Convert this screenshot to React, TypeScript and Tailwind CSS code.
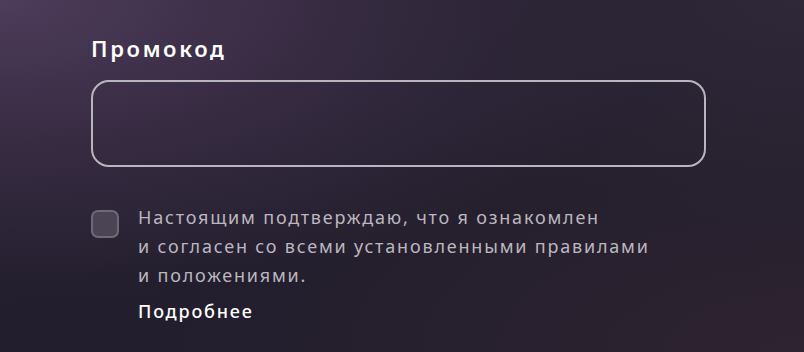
import { useState } from "react";

export default function App() {
  const [code, setCode] = useState("");
  const [agreed, setAgreed] = useState(false);

  return (
    <div
      className="relative h-[352px] w-[804px] overflow-hidden bg-[#221e2d] font-['Noto_Sans',sans-serif]"
    >
      <div className="pointer-events-none absolute inset-0 bg-[radial-gradient(ellipse_at_0%_0%,#4d3c5a_0%,#3a2d45_25%,rgba(34,30,45,0)_60%)]" />
      <div className="pointer-events-none absolute inset-0 bg-[radial-gradient(ellipse_at_100%_100%,#2e2330_0%,rgba(34,30,45,0)_55%)]" />
      <div className="pointer-events-none absolute inset-0 bg-[radial-gradient(ellipse_at_100%_0%,#2f2838_0%,rgba(34,30,45,0)_45%)]" />

      <div className="relative flex flex-col px-[91px] pt-[31px]">
        <h2 className="text-[22px] font-semibold leading-[34px] tracking-[0.12em] text-white">Промокод</h2>

        <input
          value={code}
          onChange={(e) => setCode(e.target.value)}
          className="mt-[15px] h-[87px] w-[615px] rounded-[18px] border-2 border-[#b9b5be] bg-transparent px-5 text-lg text-white outline-none"
        />

        <div className="mt-[36px] flex items-start gap-[19px]">
          <button
            onClick={() => setAgreed(!agreed)}
            className="mt-[7px] h-[28px] w-[28px] shrink-0 rounded-[7px] border-2 border-[#6f6977] bg-[#4a4454]"
          >
            {agreed && <span className="block text-center text-sm text-white">✓</span>}
          </button>

          <div className="flex flex-col">
            <p className="text-[18px] leading-[29px] tracking-[0.1em] text-[#bbb7bf]">
              Настоящим подтверждаю, что я ознакомлен
              <br />
              и согласен со всеми установленными правилами
              <br />
              и положениями.
            </p>
            <a className="mt-[9px] text-[18px] font-medium leading-[24px] tracking-[0.1em] text-white">Подробнее</a>
          </div>
        </div>
      </div>
    </div>
  );
}
